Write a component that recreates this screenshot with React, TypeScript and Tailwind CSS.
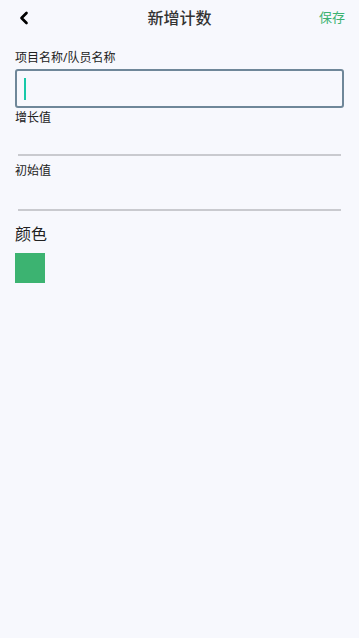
import { ChevronLeft } from "lucide-react";

export default function App() {
  return (
    <div
      className="flex min-h-[638px] w-full flex-col bg-[#f7f8fd] text-[#222]"
      style={{ fontFamily: '"Noto Sans", "Noto Sans CJK SC", sans-serif' }}
    >
      <header className="flex h-[36px] items-center justify-between px-[14px]">
        <ChevronLeft className="size-[20px] text-black" strokeWidth={3.2} />
        <h1 className="pl-[6px] text-[16px] font-medium text-[#333]">新增计数</h1>
        <button className="text-[13px] text-[#3cb371]">保存</button>
      </header>

      <div className="flex flex-col px-[15px] pt-[14px]">
        <label className="text-[12px] leading-[16px] text-[#222]">项目名称/队员名称</label>
        <div className="mt-[3px] flex h-[39px] items-center rounded-[3px] border-2 border-[#6f8799] px-[7px]">
          <span className="h-[22px] w-[2px] bg-[#17c9a8]" />
        </div>

        <label className="mt-[2px] text-[12px] leading-[16px] text-[#222]">增长值</label>
        <div className="mx-[3px] mt-[28px] h-[2px] bg-[#c9cacf]" />

        <label className="mt-[7px] text-[12px] leading-[16px] text-[#222]">初始值</label>
        <div className="mx-[3px] mt-[30px] h-[2px] bg-[#c9cacf]" />

        <span className="mt-[13px] text-[16px] leading-[20px] text-[#222]">颜色</span>
        <div className="mt-[9px] size-[30px] bg-[#3cb371]" />
      </div>
    </div>
  );
}
